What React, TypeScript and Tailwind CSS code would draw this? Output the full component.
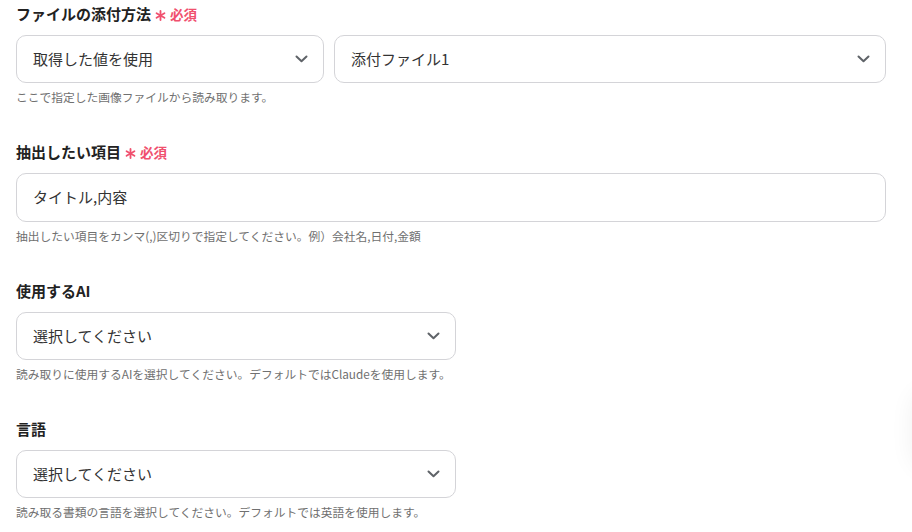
import React from "react";

const Chevron = () => (
  <svg width="13" height="8" viewBox="0 0 13 8" fill="none" className="shrink-0">
    <polyline points="1.5,1.5 6.5,6.3 11.5,1.5" stroke="#5f6368" strokeWidth="2" strokeLinecap="round" strokeLinejoin="round" />
  </svg>
);

const Star = () => (
  <svg width="11" height="11" viewBox="0 0 12 12" className="mr-[4px] relative top-[1px]">
    <g stroke="#f0506e" strokeWidth="2" strokeLinecap="round">
      <line x1="6" y1="1" x2="6" y2="11" />
      <line x1="1.7" y1="3.5" x2="10.3" y2="8.5" />
      <line x1="1.7" y1="8.5" x2="10.3" y2="3.5" />
    </g>
  </svg>
);

const Required = () => (
  <span className="ml-[4px] inline-flex items-center text-[#f0506e] text-[13.5px] font-bold">
    <Star />
    必須
  </span>
);

const Label = ({ text, required }: { text: string; required?: boolean }) => (
  <div className="h-[22px] flex items-center text-[15px] font-bold text-[#222] leading-[22px]">
    {text}
    {required && <Required />}
  </div>
);

const Select = ({ text, className }: { text: string; className: string }) => (
  <div className={`h-[48px] border border-[#d4d4d8] rounded-[10px] bg-white flex items-center justify-between pl-[16px] pr-[15px] ${className}`}>
    <span className="text-[15px] text-[#333]">{text}</span>
    <Chevron />
  </div>
);

const Help = ({ text }: { text: string }) => (
  <div className="mt-[6px] h-[16px] leading-[16px] text-[11.75px] text-[#707070]">{text}</div>
);

export default function App() {
  return (
    <div
      className="relative w-[912px] h-[532px] bg-white overflow-hidden pl-[16px] pt-[3px]"
      style={{ fontFamily: '"Noto Sans CJK JP", "Noto Sans", sans-serif' }}
    >
      <div>
        <Label text="ファイルの添付方法" required />
        <div className="mt-[10px] flex gap-[10px] w-[870px]">
          <Select text="取得した値を使用" className="w-[308px]" />
          <Select text="添付ファイル1" className="flex-1" />
        </div>
        <Help text="ここで指定した画像ファイルから読み取ります。" />
      </div>

      <div className="mt-[36px]">
        <Label text="抽出したい項目" required />
        <div className="mt-[10px] w-[870px] h-[49px] border border-[#d4d4d8] rounded-[10px] bg-white flex items-center pl-[16px]">
          <span className="text-[15px] text-[#333]">タイトル,内容</span>
        </div>
        <Help text="抽出したい項目をカンマ(,)区切りで指定してください。例）会社名,日付,金額" />
      </div>

      <div className="mt-[36px]">
        <Label text="使用するAI" />
        <div className="mt-[10px]">
          <Select text="選択してください" className="w-[440px]" />
        </div>
        <Help text="読み取りに使用するAIを選択してください。デフォルトではClaudeを使用します。" />
      </div>

      <div className="mt-[36px]">
        <Label text="言語" />
        <div className="mt-[10px]">
          <Select text="選択してください" className="w-[440px]" />
        </div>
        <Help text="読み取る書類の言語を選択してください。デフォルトでは英語を使用します。" />
      </div>

      <div className="absolute right-[-40px] top-[390px] w-[40px] h-[80px] rounded-full shadow-[0_0_24px_rgba(0,0,0,0.06)]" />
    </div>
  );
}
